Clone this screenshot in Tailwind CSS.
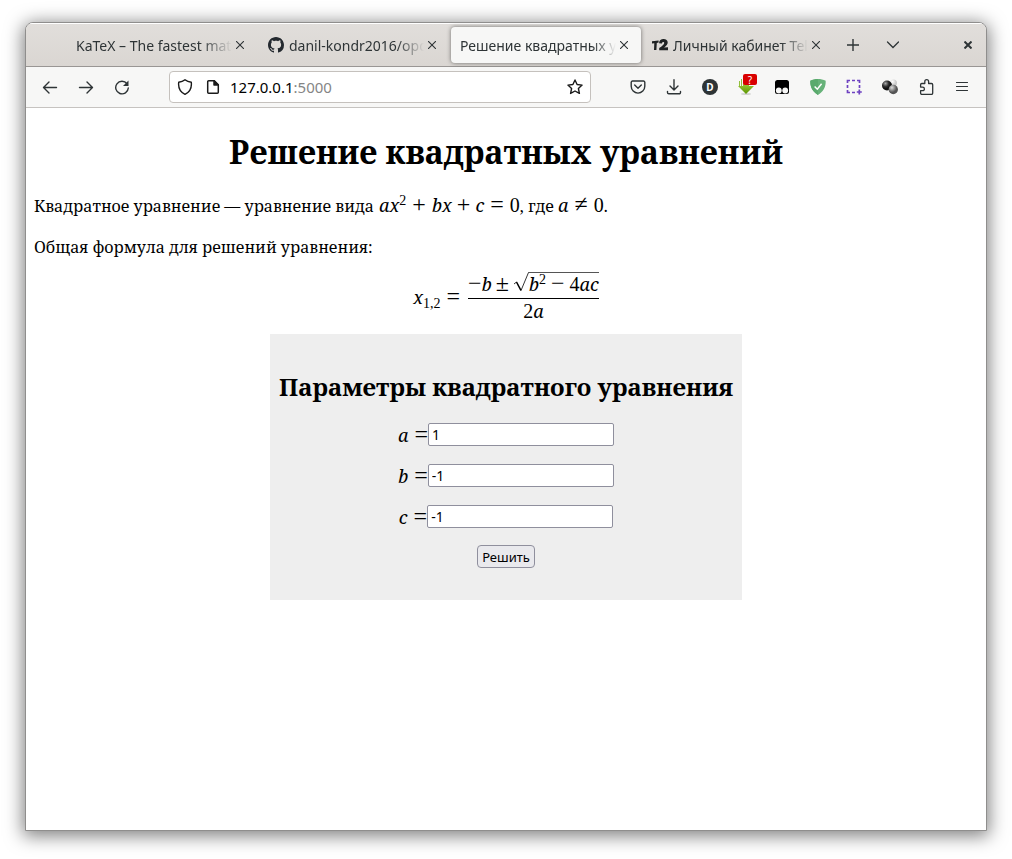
<!DOCTYPE html>
<html lang="ru">
<head>
<meta charset="utf-8">
<meta name="viewport" content="width=device-width, initial-scale=1">
<title>Решение квадратных уравнений</title>
<script src="https://cdn.jsdelivr.net/npm/@tailwindcss/browser@4"></script>
</head>
<body class="flex min-h-screen flex-col bg-white px-[25px] pt-[22px] pb-[28px] font-['Noto_Sans','Open_Sans',sans-serif] text-[#2e3436]">
<div class="flex flex-1 flex-col overflow-hidden rounded-t-lg border border-[#8f8e8d] bg-white shadow-[0_3px_18px_2px_rgba(0,0,0,0.5)]">

  <!-- Tab strip -->
  <header class="flex h-11 shrink-0 items-center border-t border-b border-t-white border-b-[#999694] bg-linear-to-b from-[#e1dedb] to-[#dad6d2] pr-2 pl-[41px] text-sm">
    <div class="flex h-9 w-48 min-w-0 items-center pr-[11px] pl-[9px]">
      <span class="flex-1 overflow-hidden pt-0.5 whitespace-nowrap mask-r-from-80% mask-r-to-100%">KaTeX – The fastest mat</span>
      <button aria-label="Закрыть вкладку" class="flex size-4 shrink-0 items-center justify-center"><svg class="size-2" viewBox="0 0 8 8" fill="none" stroke="currentColor" stroke-width="1.1"><path d="M0 0l8 8M8 0L0 8"/></svg></button>
    </div>
    <div class="flex h-9 w-48 min-w-0 items-center pr-[11px] pl-[9px]">
      <svg class="mr-[5px] size-4 shrink-0" viewBox="0 0 16 16" fill="#24292f"><path d="M8 0C3.58 0 0 3.58 0 8c0 3.54 2.29 6.53 5.47 7.59.4.07.55-.17.55-.38 0-.19-.01-.82-.01-1.49-2.01.37-2.53-.49-2.69-.94-.09-.23-.48-.94-.82-1.13-.28-.15-.68-.52-.01-.53.63-.01 1.08.58 1.23.82.72 1.21 1.87.87 2.33.66.07-.52.28-.87.51-1.07-1.78-.2-3.64-.89-3.64-3.95 0-.87.31-1.59.82-2.15-.08-.2-.36-1.02.08-2.12 0 0 .67-.21 2.2.82.64-.18 1.32-.27 2-.27s1.36.09 2 .27c1.53-1.04 2.2-.82 2.2-.82.44 1.1.16 1.92.08 2.12.51.56.82 1.27.82 2.15 0 3.07-1.87 3.75-3.65 3.95.29.25.54.73.54 1.48 0 1.07-.01 1.93-.01 2.2 0 .21.15.46.55.38A8.01 8.01 0 0016 8c0-4.42-3.58-8-8-8z"/></svg>
      <span class="flex-1 overflow-hidden pt-0.5 whitespace-nowrap mask-r-from-80% mask-r-to-100%">danil-kondr2016/opd</span>
      <button aria-label="Закрыть вкладку" class="flex size-4 shrink-0 items-center justify-center"><svg class="size-2" viewBox="0 0 8 8" fill="none" stroke="currentColor" stroke-width="1.1"><path d="M0 0l8 8M8 0L0 8"/></svg></button>
    </div>
    <div class="mr-0.5 flex h-9 w-[190px] min-w-0 items-center rounded bg-[#f7f7f6] pr-[9px] pl-[9px] shadow-[0_0_4px_rgba(0,0,0,0.5)]">
      <span class="flex-1 overflow-hidden pt-0.5 whitespace-nowrap mask-r-from-85% mask-r-to-100%">Решение квадратных ур</span>
      <button aria-label="Закрыть вкладку" class="flex size-4 shrink-0 items-center justify-center"><svg class="size-2" viewBox="0 0 8 8" fill="none" stroke="currentColor" stroke-width="1.1"><path d="M0 0l8 8M8 0L0 8"/></svg></button>
    </div>
    <div class="flex h-9 w-48 min-w-0 items-center pr-[11px] pl-[9px]">
      <svg class="mr-[5px] size-4 shrink-0" viewBox="0 0 16 16" fill="#1f2223"><path d="M0 4.200l6.600-.8v2.200l-1.800.3-.4 7H2l.3-6.600L0 6.600z"/><path d="M7 6.200C7.300 3.400 9 2 11.500 2c2.600 0 4.200 1.300 4.200 3.600 0 2-1.200 3.100-3.600 5l3.900-.3v3H7.200v-2.200c3.600-2.600 5-4 5-5.200 0-.7-.4-1-1-1-.7 0-1.100.5-1.200 1.500z"/></svg>
      <span class="flex-1 overflow-hidden pt-0.5 whitespace-nowrap mask-r-from-80% mask-r-to-100%">Личный кабинет Tel</span>
      <button aria-label="Закрыть вкладку" class="flex size-4 shrink-0 items-center justify-center"><svg class="size-2" viewBox="0 0 8 8" fill="none" stroke="currentColor" stroke-width="1.1"><path d="M0 0l8 8M8 0L0 8"/></svg></button>
    </div>
    <button aria-label="Новая вкладка" class="flex h-9 w-9 items-center justify-center"><svg class="size-4" viewBox="0 0 16 16" fill="none" stroke="currentColor" stroke-width="1.4"><path d="M8 2v12M2 8h12"/></svg></button>
    <button aria-label="Список вкладок" class="flex h-9 w-11 items-center justify-center"><svg class="size-4" viewBox="0 0 16 16" fill="none" stroke="currentColor" stroke-width="1.3" stroke-linecap="round"><path d="M2.500 5L8 10.500 13.500 5"/></svg></button>
    <button aria-label="Закрыть окно" class="ml-auto flex h-9 w-5 items-center justify-center"><svg class="size-2" viewBox="0 0 8 8" fill="none" stroke="currentColor" stroke-width="2"><path d="M.5.5l7 7M7.500.5l-7 7"/></svg></button>
  </header>

  <!-- Navigation bar -->
  <nav class="flex h-[41px] shrink-0 items-center border-b border-[#c6c3c0] bg-[#f7f7f6] px-1.5">
    <button aria-label="Назад" class="flex h-8 w-9 items-center justify-center"><svg class="size-4" viewBox="0 0 16 16" fill="none" stroke="currentColor" stroke-width="1.4" stroke-linecap="round" stroke-linejoin="round"><path d="M14.500 8.500H1.500M7 3L1.500 8.500 7 14"/></svg></button>
    <button aria-label="Вперёд" class="flex h-8 w-9 items-center justify-center"><svg class="size-4" viewBox="0 0 16 16" fill="none" stroke="currentColor" stroke-width="1.4" stroke-linecap="round" stroke-linejoin="round"><path d="M1.500 8.500h13M9 3l5.500 5.500L9 14"/></svg></button>
    <button aria-label="Обновить" class="flex h-8 w-9 items-center justify-center"><svg class="size-4" viewBox="0 0 16 16" fill="none" stroke="currentColor" stroke-width="1.4" stroke-linecap="round"><path d="M13 4.700A6.300 6.300 0 1 0 14.300 9"/><path d="M14.500 1.500v5.500H9z" fill="currentColor" stroke="none"/></svg></button>
    <div class="mx-[29px] flex h-8 min-w-0 flex-1 items-center rounded border border-[#c5c1bd] bg-white px-[7px] text-[#1a1a1a]">
      <svg class="size-4 shrink-0" viewBox="0 0 16 16" fill="none" stroke="currentColor" stroke-width="1.4" stroke-linejoin="round"><path d="M8 .8C9.500 2 12 3 14.300 3.300c.5 4.500-.8 9.400-6.300 12C2.500 12.700 1.200 7.800 1.700 3.300 4 3 6.500 2 8 .8z"/></svg>
      <svg class="ml-3 size-4 shrink-0" viewBox="0 0 16 16" fill="none" stroke="currentColor" stroke-width="1.500" stroke-linejoin="round"><path d="M3.700 1.700h5.600l4 4v7.600a1 1 0 0 1-1 1H3.700a1 1 0 0 1-1-1V2.700a1 1 0 0 1 1-1z"/><path d="M9 1.700V6h4.300z" fill="currentColor"/></svg>
      <button aria-label="Адрес" class="ml-[9px] min-w-0 flex-1 cursor-text text-left text-[15px] text-black">127.0.0.1<span class="text-[#858585]">:5000</span></button>
      <button aria-label="Добавить в закладки" class="shrink-0"><svg class="size-4" viewBox="0 0 16 16" fill="none" stroke="currentColor" stroke-width="1.4" stroke-linejoin="round"><path d="M8 1l2.100 4.500 5 .6-3.700 3.400 1 4.900L8 12l-4.400 2.400 1-4.900L.9 6.100l5-.6z"/></svg></button>
    </div>
    <button aria-label="Pocket" class="flex h-8 w-9 items-center justify-center"><svg class="size-4" viewBox="0 0 16 16" fill="none" stroke="currentColor" stroke-width="1.400" stroke-linecap="round" stroke-linejoin="round"><path d="M2.500 2h11a1.300 1.300 0 0 1 1.300 1.300v4A6.800 6.800 0 0 1 1.200 7.300v-4A1.300 1.300 0 0 1 2.500 2zM4.700 6L8 9.200 11.300 6"/></svg></button>
    <button aria-label="Загрузки" class="flex h-8 w-9 items-center justify-center"><svg class="size-4" viewBox="0 0 16 16" fill="none" stroke="currentColor" stroke-width="1.400" stroke-linecap="round" stroke-linejoin="round"><path d="M8 .7v10M4 7l4 4 4-4M1.500 12.500v1A1.300 1.300 0 0 0 2.800 14.800h10.400a1.300 1.300 0 0 0 1.300-1.300v-1"/></svg></button>
    <button aria-label="Расширение D" class="flex h-8 w-9 items-center justify-center"><span class="flex size-4 items-center justify-center rounded-full bg-[#2e3436] text-[10px] font-bold text-white">D</span></button>
    <button aria-label="Загрузчик" class="relative flex h-8 w-9 items-center justify-center">
      <svg class="size-4" viewBox="0 0 16 16"><defs><linearGradient id="arrow" x2="0" y2="1"><stop offset="0" stop-color="#b5dc4c"/><stop offset="1" stop-color="#5a9500"/></linearGradient></defs><ellipse cx="8" cy="15" rx="5" ry="1" fill="#d2d2d0"/><path d="M5 1h6v6h5l-8 8-8-8h5z" fill="url(#arrow)"/><path d="M1.500 2v5M3.500 0v7" stroke="#91bf3c"/></svg>
      <span class="absolute top-[3px] right-[7px] flex h-[11px] w-3.5 items-center justify-center rounded-xs bg-[#d90000] text-[10px] leading-none text-white">?</span>
    </button>
    <button aria-label="Tampermonkey" class="flex h-8 w-9 items-center justify-center"><svg class="size-4" viewBox="0 0 16 16"><rect x="1" y="1" width="14" height="14" rx="2.500" fill="#000"/><circle cx="4.800" cy="11.500" r="2.900" fill="#f7f7f6"/><circle cx="11.200" cy="11.500" r="2.900" fill="#f7f7f6"/></svg></button>
    <button aria-label="AdGuard" class="flex h-8 w-9 items-center justify-center"><svg class="size-4" viewBox="0 0 16 16"><path d="M8 0c2.500 0 5.500.6 7.700 1.700C15.700 4.300 16 11 8 16 0 11 .3 4.300.3 1.700 2.500.6 5.500 0 8 0z" fill="#67b279"/><path d="M8 0C5.500 0 2.500.6.3 1.700.3 4.300 0 11 8 16z" fill="#5aaa6d"/><path d="M4.600 7.500l2.700 2.700 4.300-5.500" fill="none" stroke="#fff" stroke-width="1.500"/></svg></button>
    <button aria-label="Снимок области" class="flex h-8 w-9 items-center justify-center"><svg class="size-4" viewBox="0 0 16 16" fill="none" stroke="#6e42c1" stroke-width="1.700"><path d="M1.500 4V1.500H4M6 1.500h3M11 1.500h2.500V4M13.500 6v3M1.500 6v3M1.500 11v2.500H4M6 13.500h3M13.300 10.500v5M10.800 13h5"/></svg></button>
    <button aria-label="Шары" class="flex h-8 w-9 items-center justify-center"><svg class="size-4" viewBox="0 0 16 16"><defs><radialGradient id="dark" cx=".35" cy=".3"><stop offset="0" stop-color="#aaa"/><stop offset=".6" stop-color="#333"/><stop offset="1" stop-color="#111"/></radialGradient><radialGradient id="grey" cx=".35" cy=".3"><stop offset="0" stop-color="#ddd"/><stop offset="1" stop-color="#555"/></radialGradient><radialGradient id="light" cx=".35" cy=".3"><stop offset="0" stop-color="#fff"/><stop offset="1" stop-color="#ccc"/></radialGradient></defs><circle cx="11.500" cy="4" r="3.500" fill="url(#light)"/><circle cx="5" cy="6.500" r="5" fill="url(#dark)"/><circle cx="11.300" cy="10.500" r="4.700" fill="url(#grey)"/></svg></button>
    <button aria-label="Расширения" class="flex h-8 w-9 items-center justify-center"><svg class="size-4" viewBox="0 0 16 16" fill="none" stroke="currentColor" stroke-width="1.300" stroke-linejoin="round"><path d="M6.800 4.500V2.600a1.900 1.900 0 0 1 3.800 0v1.900h2.900a1.200 1.200 0 0 1 1.200 1.200v8.400a1.200 1.200 0 0 1-1.200 1.200H3.800a1.200 1.200 0 0 1-1.200-1.200v-2.400h2a1.800 1.800 0 0 0 0-3.600h-2V5.700a1.200 1.200 0 0 1 1.200-1.200z"/></svg></button>
    <button aria-label="Меню" class="flex h-8 w-9 items-center justify-center"><svg class="size-4" viewBox="0 0 16 16" fill="none" stroke="currentColor" stroke-width="1.200" stroke-linecap="round"><path d="M2.500 3.500h11M2.500 7.500h11M2.500 11.500h11"/></svg></button>
  </nav>

  <!-- Page -->
  <main class="flex-1 px-2 pt-[22px] font-['Noto_Serif','Liberation_Serif',serif] text-base text-black">
    <h1 class="text-center text-[32px] leading-[44px] font-bold">Решение квадратных уравнений</h1>
    <p class="mt-[18px] flex h-6 items-baseline whitespace-pre">Квадратное уравнение — уравнение вида <span class="ml-px flex items-baseline font-['Liberation_Serif',serif] text-xl leading-6"><i class="font-['Noto_Serif',serif] text-lg leading-6">ax</i><sup class="text-sm leading-none">2</sup><span class="mx-1.5 text-2xl leading-6">+</span><i class="font-['Noto_Serif',serif] text-lg leading-6">bx</i><span class="mx-[5px] text-2xl leading-6">+</span><i class="font-['Noto_Serif',serif] text-lg leading-6">c</i><span class="mx-1.5 text-2xl leading-6">=</span>0</span>, где <span class="flex items-baseline font-['Liberation_Serif',serif] text-xl leading-6"><i class="font-['Noto_Serif',serif] text-lg leading-6">a</i><span class="mx-1.5 text-2xl leading-6">≠</span>0</span>.</p>
    <p class="mt-[19px] leading-6">Общая формула для решений уравнения:</p>
    <div class="mt-3 flex h-[51px] items-center justify-center font-['Liberation_Serif',serif] text-xl leading-6">
      <span class="flex items-baseline"><i class="font-['Noto_Serif',serif] text-lg leading-6">x</i><sub class="text-sm leading-none">1,2</sub><span class="mx-1.5 text-2xl leading-6">=</span></span>
      <span class="ml-0.5 flex flex-col items-center">
        <span class="flex items-baseline border-b border-black pb-0.5">
          <span class="text-2xl leading-6">−</span><i class="font-['Noto_Serif',serif] text-lg leading-6">b</i><span class="mx-1 text-2xl leading-6">±</span>
          <span class="flex items-stretch"><svg class="h-6 w-4" viewBox="0 0 16 24" fill="none" stroke="#000"><path d="M1 14l2.500-2" stroke-width=".8"/><path d="M3.500 12l4.500 8.500" stroke-width="1.600"/><path d="M8 20.500L15.500 2.500H16" stroke-width=".8"/></svg><span class="mt-0.5 flex items-baseline self-baseline border-t border-[#555] leading-[22px]"><i class="font-['Noto_Serif',serif] text-lg leading-5">b</i><sup class="text-sm leading-none">2</sup><span class="mx-[5px] text-2xl leading-5">−</span>4<i class="font-['Noto_Serif',serif] text-lg leading-5">ac</i></span></span>
        </span>
        <span>2<i class="font-['Noto_Serif',serif] text-lg leading-6">a</i></span>
      </span>
    </div>
    <form class="mx-auto mt-3 flex w-[472px] max-w-full flex-col items-center bg-[#eee] pt-9 pb-8" onsubmit="return false">
      <h2 class="text-center text-2xl leading-[33px] font-bold">Параметры квадратного уравнения</h2>
      <div class="mt-5 flex h-[23px] items-center"><label for="a" class="flex items-baseline font-['Liberation_Serif',serif] text-xl leading-6"><i class="mr-1.5 font-['Noto_Serif',serif] text-lg leading-6">a</i><span class="text-2xl leading-6">=</span></label><input id="a" value="1" class="h-[23px] w-[186px] rounded-xs border border-[#8f8f9d] bg-white px-[3px] font-['Noto_Sans',sans-serif] text-sm"></div>
      <div class="mt-[18px] flex h-[23px] items-center"><label for="b" class="flex items-baseline font-['Liberation_Serif',serif] text-xl leading-6"><i class="mr-1.5 font-['Noto_Serif',serif] text-lg leading-6">b</i><span class="text-2xl leading-6">=</span></label><input id="b" value="-1" class="h-[23px] w-[186px] rounded-xs border border-[#8f8f9d] bg-white px-[3px] font-['Noto_Sans',sans-serif] text-sm"></div>
      <div class="mt-[18px] flex h-[23px] items-center"><label for="c" class="flex items-baseline font-['Liberation_Serif',serif] text-xl leading-6"><i class="mr-1.5 font-['Noto_Serif',serif] text-lg leading-6">c</i><span class="text-2xl leading-6">=</span></label><input id="c" value="-1" class="h-[23px] w-[186px] rounded-xs border border-[#8f8f9d] bg-white px-[3px] font-['Noto_Sans',sans-serif] text-sm"></div>
      <button class="mt-[17px] h-[23px] rounded border border-[#8f8f9d] bg-[#e9e9ed] px-1 font-['Noto_Sans',sans-serif] text-[13px] leading-5">Решить</button>
    </form>
  </main>
</div>
</body>
</html>
